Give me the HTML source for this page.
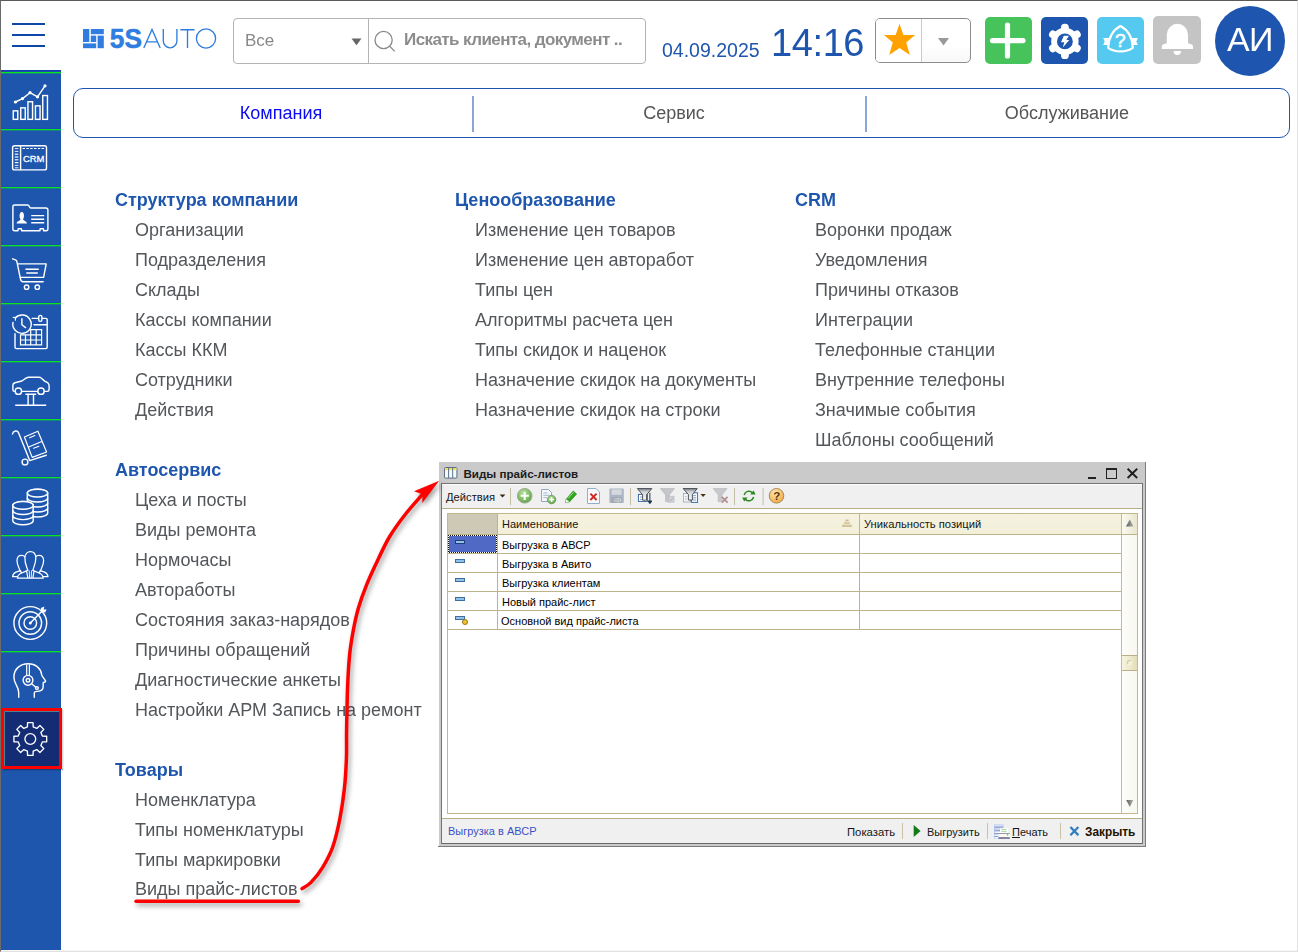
<!DOCTYPE html>
<html lang="ru">
<head>
<meta charset="utf-8">
<title>5S AUTO</title>
<style>
*{box-sizing:border-box;margin:0;padding:0}
html,body{width:1298px;height:952px;overflow:hidden;background:#fff}
body{font-family:"Liberation Sans",sans-serif;position:relative;color:#555}
.abs{position:absolute}
#frame{position:absolute;left:0;top:0;width:1298px;height:952px;border-top:1px solid #5a5a5a;border-left:1px solid #6a6a6a;border-right:1px solid #e2e2e2;border-bottom:1px solid #e1e1e1;box-shadow:inset 0 -1px 0 #f7f7f7;pointer-events:none;z-index:50}
/* sidebar */
#side{position:absolute;left:1px;top:70px;width:60px;height:880px;background:#1e56ae}
.sep{position:absolute;left:1px;width:60px;height:2px;background:#0fd12e}
.ico{position:absolute;left:2px;width:59px;height:56px}
/* header */
#ham div{position:absolute;left:12px;width:33px;height:2px;background:#0d47a8}
#search{position:absolute;left:233px;top:18px;width:413px;height:46px;border:1px solid #b4b4b4;border-radius:4px;background:#fff}
#search .div{position:absolute;left:134px;top:0;width:1px;height:44px;background:#b4b4b4}
#search .all{position:absolute;left:11px;top:12px;font-size:17px;color:#888}
#search .ph{position:absolute;left:170px;top:11px;font-size:17px;font-weight:bold;color:#8c8c8c;letter-spacing:-0.58px}
#date{position:absolute;left:662px;top:38.5px;font-size:19.5px;color:#1e56ae}
#time{position:absolute;left:770.5px;top:22px;font-size:38px;color:#1e56ae;letter-spacing:-0.4px}
/* tabs */
#tabs{position:absolute;left:73px;top:88px;width:1217px;height:50px;border:1px solid #1e56ae;border-radius:10px;background:#fff}
#tabs .t{position:absolute;top:14px;font-size:18px;color:#555;text-align:center;width:300px}
#tabs .d{position:absolute;top:7px;width:2px;height:36px;background:#8aa5d6}
/* menu */
.h{position:absolute;font-size:18px;font-weight:bold;color:#1e56ae;white-space:nowrap}
.i{position:absolute;font-size:18px;color:#53575b;white-space:nowrap}

/* window */
#win{position:absolute;left:439px;top:462px;width:707px;height:385px;background:#cacaca;font-size:11px;color:#1a1a1a}
#win .abs{position:absolute}
#win .t{position:absolute;white-space:nowrap;font-size:11px;line-height:13px;color:#161616}
.tan{position:absolute;background:#bdb38c}
.rowic{position:absolute;width:10px;height:4px;background:#93c2e8;border:1px solid #3f6d9c;box-sizing:border-box}
#menu,#tabs,#search,#date,#time,.gs{will-change:transform}
</style>
</head>
<body>
<div id="side"></div>
<!--SIDEBAR-->
<svg class="abs" style="left:0;top:0" width="70" height="952" viewBox="0 0 70 952">
<rect x="1" y="70" width="60" height="2" fill="#0e42aa"/>
<rect x="1" y="71" width="60" height="1" fill="#1b4db2"/><rect x="1" y="72" width="60" height="1" fill="#08e620"/><rect x="1" y="73" width="60" height="1" fill="#1a8f74" opacity="0.75"/>
<rect x="1" y="128" width="60" height="1" fill="#1b4db2"/><rect x="1" y="129" width="60" height="1" fill="#08e620"/><rect x="1" y="130" width="60" height="1" fill="#1a8f74" opacity="0.75"/>
<rect x="1" y="186" width="60" height="1" fill="#1b4db2"/><rect x="1" y="187" width="60" height="1" fill="#08e620"/><rect x="1" y="188" width="60" height="1" fill="#1a8f74" opacity="0.75"/>
<rect x="1" y="244" width="60" height="1" fill="#1b4db2"/><rect x="1" y="245" width="60" height="1" fill="#08e620"/><rect x="1" y="246" width="60" height="1" fill="#1a8f74" opacity="0.75"/>
<rect x="1" y="302" width="60" height="1" fill="#1b4db2"/><rect x="1" y="303" width="60" height="1" fill="#08e620"/><rect x="1" y="304" width="60" height="1" fill="#1a8f74" opacity="0.75"/>
<rect x="1" y="360" width="60" height="1" fill="#1b4db2"/><rect x="1" y="361" width="60" height="1" fill="#08e620"/><rect x="1" y="362" width="60" height="1" fill="#1a8f74" opacity="0.75"/>
<rect x="1" y="418" width="60" height="1" fill="#1b4db2"/><rect x="1" y="419" width="60" height="1" fill="#08e620"/><rect x="1" y="420" width="60" height="1" fill="#1a8f74" opacity="0.75"/>
<rect x="1" y="476" width="60" height="1" fill="#1b4db2"/><rect x="1" y="477" width="60" height="1" fill="#08e620"/><rect x="1" y="478" width="60" height="1" fill="#1a8f74" opacity="0.75"/>
<rect x="1" y="534" width="60" height="1" fill="#1b4db2"/><rect x="1" y="535" width="60" height="1" fill="#08e620"/><rect x="1" y="536" width="60" height="1" fill="#1a8f74" opacity="0.75"/>
<rect x="1" y="592" width="60" height="1" fill="#1b4db2"/><rect x="1" y="593" width="60" height="1" fill="#08e620"/><rect x="1" y="594" width="60" height="1" fill="#1a8f74" opacity="0.75"/>
<rect x="1" y="650" width="60" height="1" fill="#1b4db2"/><rect x="1" y="651" width="60" height="1" fill="#08e620"/><rect x="1" y="652" width="60" height="1" fill="#1a8f74" opacity="0.75"/>
<g fill="none" stroke="#fff" stroke-width="1.42" stroke-linecap="round" stroke-linejoin="round">
<rect x="13.25" y="110.85" width="4.50" height="8.50" stroke-linejoin="miter"/>
<rect x="20.75" y="107.85" width="4.50" height="11.50" stroke-linejoin="miter"/>
<rect x="27.95" y="101.75" width="4.60" height="17.60" stroke-linejoin="miter"/>
<rect x="35.45" y="105.85" width="4.60" height="13.50" stroke-linejoin="miter"/>
<rect x="42.75" y="95.55" width="4.70" height="23.80" stroke-linejoin="miter"/>
<path d="M15.4 102 L22.5 98.6 L30 92.7 L37.5 96.8 L45 85.8"/>
<circle cx="15.4" cy="102" r="0.9" fill="#fff"/>
<circle cx="22.5" cy="98.6" r="0.9" fill="#fff"/>
<circle cx="30" cy="92.7" r="0.9" fill="#fff"/>
<circle cx="37.5" cy="96.8" r="0.9" fill="#fff"/>
<circle cx="45" cy="85.8" r="0.9" fill="#fff"/>
<rect x="12.6" y="145.8" width="33.9" height="24.1" rx="2"/>
<path d="M20.6 146 V169.8"/>
<path d="M22.6 148.5 H45" stroke-dasharray="2.4 1.4" stroke-linecap="butt" stroke-width="1"/>
<path d="M14.8 148.6 H18.4" stroke-width="0.9" stroke-linecap="butt"/>
<path d="M14.8 151.4 H18.4" stroke-width="0.9" stroke-linecap="butt"/>
<path d="M14.8 154.2 H18.4" stroke-width="1.2" stroke-linecap="butt"/>
<path d="M14.8 157 H18.4" stroke-width="1.2" stroke-linecap="butt"/>
<path d="M14.8 159.8 H18.4" stroke-width="1.2" stroke-linecap="butt"/>
<path d="M14.8 162.6 H18.4" stroke-width="1.2" stroke-linecap="butt"/>
<path d="M14.8 165.4 H18.4" stroke-width="0.9" stroke-linecap="butt"/>
<path d="M14.8 167.8 H18.4" stroke-width="0.9" stroke-linecap="butt"/>
<text x="33.6" y="162" text-anchor="middle" font-family="Liberation Sans, sans-serif" font-size="9.4" fill="#fff" stroke="#fff" stroke-width="0.3" textLength="21.4" lengthAdjust="spacingAndGlyphs">CRM</text>
<path d="M14.4 205 H27.6 Q28.6 205 29.2 206.2 L29.8 207.4 Q30.2 208 31.2 208 H45.8 Q47.9 208 47.9 210 V229 Q47.9 230.8 46 230.8 H43.6 V229.4 Q43.6 228.8 43 228.8 H40.6 Q40 228.8 40 229.4 V230.8 H21.6 V229.4 Q21.6 228.8 21 228.8 H18.6 Q18 228.8 18 229.4 V230.8 H14.8 Q12.9 230.8 12.9 229 V206.6 Q12.9 205 14.4 205 Z"/>
<path d="M31.2 215.6 H44.2 M31.2 219.2 H44.2 M31.2 222.8 H44.2" stroke-linecap="butt"/>
<path d="M16.6 223.6 C17 220.8 19.6 221 20.6 219.4 C19.2 217.8 19 212 21.8 212 C24.6 212 24.4 217.8 23 219.4 C24 221 26.6 220.8 27 223.6 Z" fill="#fff" stroke="none"/>
<path d="M12.6 258.8 L15.4 259.8 Q16.6 260.2 16.9 261.6 L20.4 278.6 Q21 281.8 23 281.8 H43.2"/>
<path d="M17.6 263.9 H46.2 L43.6 277.4 H20.3"/>
<path d="M25.4 269.3 H38.8 M26.3 273 H37.8" stroke-linecap="butt"/>
<circle cx="26.6" cy="287.2" r="2.2"/><circle cx="37.3" cy="287.2" r="2.2"/>
<path d="M15 333.6 V347.2 Q15 348.6 16.4 348.6 H45.8 Q47.2 348.6 47.2 347.2 V319.8 Q47.2 318.4 45.8 318.4 H42.4 M38.2 318.4 H32.2 M34 324.8 H47.2"/>
<rect x="38.7" y="315.4" width="3.2" height="6" rx="1.6"/>
<path d="M15.2 318 A9.2 9.2 0 1 1 13 322.4" /><path d="M13.2 317.4 L15.6 317.6 L15.4 320.2" stroke-width="1.1"/>
<path d="M21.9 318.8 V324.8 L25.6 327.6"/>
<path d="M30.7 329.6 H41.6 V344.8 H20.5 V334.8 H30.7 Z M30.7 334.8 H41.6 M20.5 340 H41.6 M25.5 334.8 V344.8 M30.7 334.8 V344.8 M36.2 329.6 V344.8" stroke-width="1.2" stroke-linejoin="miter"/>
<path d="M15 391.4 H14.4 Q12.9 391.4 12.9 389.8 V385.2 Q12.9 383.2 15 382.7 L21.8 381 L26.4 377.9 Q27.4 377.3 28.6 377.3 H39 Q40.4 377.3 41.4 378.2 L45 381.4 Q49.1 382.6 49.1 386 V389.6 Q49.1 391.4 47.4 391.4 H44.4 M21.8 391.4 H37.6"/>
<circle cx="18.4" cy="391.2" r="3.2"/><circle cx="41" cy="391.2" r="3.2"/>
<path d="M25.4 394.3 H36.2 M28.1 394.3 V405.2 M33.5 394.3 V405.2 M15.2 405.3 H46.2" stroke-linecap="butt"/>
<path d="M12.5 434 Q12.9 431.6 15.4 431 Q17.6 430.6 18.4 432.6 L29.7 460.6 L46.3 455.2"/>
<circle cx="25" cy="462" r="2.9"/>
<path d="M24.4 437 L37.9 431.2 L46.6 452 L32.2 457.4 Z M28.7 447 L42.3 441.3" stroke-width="1.2"/>
<path d="M29.6 437.7 L34.8 435.5 M33.6 448.3 L38.9 446.2" stroke-width="1.1"/>
<path d="M27.3 493.1 V513.1 A10.2 3.9 0 0 0 47.7 513.1 V493.1 A10.2 3.9 0 0 0 27.3 493.1 Z" fill="#1e56ae"/>
<ellipse cx="37.5" cy="493.1" rx="10.2" ry="3.9" fill="#1e56ae"/>
<path d="M27.3 498.1 A10.2 3.9 0 0 0 47.7 498.1"/>
<path d="M27.3 503.1 A10.2 3.9 0 0 0 47.7 503.1"/>
<path d="M27.3 508.1 A10.2 3.9 0 0 0 47.7 508.1"/>
<path d="M12.8 505.4 V520.85 A10.2 3.9 0 0 0 33.2 520.85 V505.4 A10.2 3.9 0 0 0 12.8 505.4 Z" fill="#1e56ae"/>
<ellipse cx="23" cy="505.4" rx="10.2" ry="3.9" fill="#1e56ae"/>
<path d="M12.8 510.54999999999995 A10.2 3.9 0 0 0 33.2 510.54999999999995"/>
<path d="M12.8 515.6999999999999 A10.2 3.9 0 0 0 33.2 515.6999999999999"/>
<path d="M20.4 571.6 C19.4 568.4 16.9 565.4 17 560.4 C17.1 556.8 19.4 555.3 21.6 555.3 C23.2 555.3 24.4 556 25 557 M40.2 571.6 C41.2 568.4 43.7 565.4 43.6 560.4 C43.5 556.8 41.2 555.3 39 555.3 C37.4 555.3 36.2 556 35.6 557" stroke-width="1.25"/>
<path d="M12.6 576.6 Q13 573.4 16 572.2 L20.2 570.6 L21.8 572.8 M12.6 576.6 H17.6 M48 576.6 Q47.6 573.4 44.6 572.2 L40.4 570.6 L38.8 572.8 M48 576.6 H43" stroke-width="1.25"/>
<path d="M17.4 578.2 Q17.6 575 20 573.8 L27 570.6 L33.6 570.6 L40.6 573.8 Q43 575 43.2 578.2 Z" fill="#1e56ae" stroke="none"/>
<path d="M27.8 570.2 C26.6 566.4 24.7 563.4 24.9 558 C25.1 553.6 27.8 551.5 30.4 551.5 C33.2 551.5 35.7 553.6 35.8 558 C35.9 563.4 34 566.4 32.8 570.2" fill="#1e56ae" stroke-width="1.25"/>
<path d="M17.4 578.2 Q17.6 575 20 573.8 L27.6 570.4 M33 570.4 L40.6 573.8 Q43 575 43.2 578.2 M17.4 578.2 H43.2 M26.6 571.2 L27.9 577.8 M34 571.2 L32.9 577.8" stroke-width="1.2"/><path d="M29.2 570.8 L29.6 577.8 M31.6 570.8 L31.2 577.8" stroke-width="0.9"/>
<circle cx="30.3" cy="623" r="16.4"/><circle cx="30.3" cy="623" r="11.3"/><circle cx="30.3" cy="623" r="6.3"/>
<circle cx="30.3" cy="623" r="1.5" fill="#fff" stroke="none"/>
<path d="M30.3 623 L42.4 610.8" stroke-width="1.4"/>
<path d="M40.8 608 L44.4 606.6 L43.6 609.6 L46.6 609.6 L45.2 612.6 L41.4 612.2 Z" fill="#fff" stroke="none"/>
<path d="M18.7 697.2 V692.4 C18.7 686.4 13.9 684.2 13.9 677 C13.9 669 20.2 663.8 28 663.8 C35.8 663.8 40.8 668.4 41.6 674.4 Q41.8 675.4 42.4 676.4 L45.4 680.6 Q45.9 681.6 44.8 682 L43.2 682.6 V686.6 C43.2 690 41 691.2 37.6 691.4 L35.4 691.6 Q34.3 691.8 34.3 693 V697.2"/>
<path d="M26.7 664.4 V675.4 M29.4 664.4 V675.4" stroke-linecap="butt" stroke-width="1.2"/>
<circle cx="28" cy="680.3" r="4.9" fill="#1e56ae"/><circle cx="28" cy="680.3" r="1.8"/>
<path d="M31.6 683.8 L35.8 687.2"/><circle cx="36.9" cy="688.1" r="1.4" fill="#1e56ae"/>
</g>
<rect x="63" y="710" width="1" height="60" fill="#000" opacity="0.07"/><rect x="3" y="769" width="60" height="1" fill="#000" opacity="0.28"/><rect x="3" y="770" width="60" height="1" fill="#000" opacity="0.10"/>
<rect x="62" y="709" width="1" height="61" fill="#000" opacity="0.18"/>
<rect x="1" y="708" width="61" height="61" fill="#ff0000"/>
<rect x="4" y="711" width="55" height="55" fill="#132c74"/>
<path d="M4.5 766 V711.5 H59" fill="none" stroke="#5f8a96" stroke-width="1" opacity="0.9"/>
<path d="M27.41 726.94 L27.56 722.63 L33.04 722.63 L33.19 726.94 L36.78 728.43 L39.94 725.49 L43.81 729.36 L40.87 732.52 L42.36 736.11 L46.67 736.26 L46.67 741.74 L42.36 741.89 L40.87 745.48 L43.81 748.64 L39.94 752.51 L36.78 749.57 L33.19 751.06 L33.04 755.37 L27.56 755.37 L27.41 751.06 L23.82 749.57 L20.66 752.51 L16.79 748.64 L19.73 745.48 L18.24 741.89 L13.93 741.74 L13.93 736.26 L18.24 736.11 L19.73 732.52 L16.79 729.36 L20.66 725.49 L23.82 728.43 Z" fill="none" stroke="#fff" stroke-width="1.35" stroke-linejoin="round"/>
<circle cx="30.3" cy="739" r="5.4" fill="none" stroke="#fff" stroke-width="1.35"/>
</svg>
<!--/SIDEBAR-->
<div id="ham"><div style="top:23px"></div><div style="top:34px"></div><div style="top:45px"></div></div>


<!-- logo -->
<svg class="abs" style="left:80px;top:24px" width="142" height="30" viewBox="80 24 142 30">
  <g fill="#2f7de0">
    <rect x="83" y="29" width="6.3" height="13"/>
    <rect x="90.8" y="29" width="13" height="5.2"/>
    <rect x="97.6" y="35.6" width="6.2" height="12.6"/>
    <rect x="83" y="43.4" width="13.2" height="4.8"/>
    <rect x="90.8" y="35.6" width="5.4" height="6.4"/>
  </g>
  <text x="109.8" y="48" font-family="Liberation Sans, sans-serif" font-weight="bold" font-size="27.4" fill="#2f7de0" stroke="#2f7de0" stroke-width="0.5" textLength="32.2" lengthAdjust="spacingAndGlyphs">5S</text>
  <g fill="none" stroke="#2f7de0" stroke-width="1.35">
    <path d="M143.8 48 L152 29.4 L160.2 48 M146.6 41.8 H157.4"/>
    <path d="M163.3 29 V41 a6.8 6.8 0 0 0 13.6 0 V29"/>
    <path d="M180.4 29.7 H194.6 M187.5 29.7 V48"/>
    <circle cx="206" cy="38.5" r="9.6"/>
  </g>
</svg>
<div id="search"><div class="div"></div><svg class="abs" style="left:116px;top:18px" width="14" height="10" viewBox="0 0 14 10"><path d="M1.5 1.5 H11.5 L6.5 8.2 Z" fill="#666"/></svg>
<svg class="abs" style="left:138px;top:10px" width="26" height="26" viewBox="0 0 26 26"><circle cx="11.6" cy="11" r="8.6" fill="none" stroke="#8a8a8a" stroke-width="1.3"/><path d="M17.6 17.2 L22.8 22.4" stroke="#8a8a8a" stroke-width="1.3"/></svg>
<div class="all">Все</div><div class="ph">Искать клиента, документ ..</div></div>
<div id="date">04.09.2025</div>
<div id="time">14:16</div>


<!-- star box -->
<div class="abs" style="left:875px;top:18px;width:96px;height:45px;border:1px solid #8c8c8c;border-radius:5px;background:linear-gradient(180deg,#fff 0%,#fff 60%,#f8f8f8 100%)"></div>
<div class="abs" style="left:876px;top:19px;width:45px;height:43px;background:#fff;border-radius:4px 0 0 4px"></div>
<div class="abs" style="left:921px;top:19px;width:1px;height:43px;background:#c9c9c9"></div>
<svg class="abs" style="left:882px;top:22px" width="36" height="36" viewBox="0 0 36 36"><path d="M17.5 1.7 L21.4 13 L33.1 13.1 L24.2 20.5 L27.9 33.1 L17.5 26.1 L7.1 33.1 L10.8 20.5 L1.9 13.1 L13.6 13 Z" fill="#ffa200"/></svg>
<svg class="abs" style="left:936px;top:36px" width="16" height="12" viewBox="0 0 16 12"><path d="M2 2 H13 L7.5 9.4 Z" fill="#9a9a9a"/></svg>
<!-- buttons -->
<div class="abs" style="left:985px;top:17px;width:47px;height:47px;border-radius:5px;background:#46c35a"></div>
<div class="abs" style="left:1041px;top:17px;width:47px;height:47px;border-radius:5px;background:#1e55ae"></div>
<div class="abs" style="left:1097px;top:17px;width:47px;height:47px;border-radius:5px;background:#56c9f1"></div>
<div class="abs" style="left:1153px;top:16px;width:48px;height:48px;border-radius:5px;background:#c4c4c4"></div>
<svg class="abs" style="left:985px;top:17px" width="47" height="47" viewBox="985 17 47 47"><path d="M992.5 40.6 H1023 M1007.5 25.2 V56" stroke="#fff" stroke-width="5.2" stroke-linecap="round" fill="none"/></svg>
<svg class="abs" style="left:1041px;top:17px" width="47" height="47" viewBox="1041 17 47 47">
  <g fill="#fff"><circle cx="1064.9" cy="41.4" r="13.7"/>
  <rect x="1061" y="23.8" width="7.8" height="35.2" rx="3.6"/>
  <rect x="1061" y="23.8" width="7.8" height="35.2" rx="3.6" transform="rotate(60 1064.9 41.4)"/>
  <rect x="1061" y="23.8" width="7.8" height="35.2" rx="3.6" transform="rotate(120 1064.9 41.4)"/></g>
  <circle cx="1064.9" cy="41.4" r="7.9" fill="#1e55ae"/>
  <path d="M1063.8 35.7 H1068.9 L1066.4 40 H1069.3 L1062.8 47.6 L1064.3 42.3 H1061 Z" fill="#fff"/>
</svg>
<svg class="abs" style="left:1097px;top:17px" width="47" height="47" viewBox="1097 17 47 47">
  <path d="M1120.4 26 C1113 30 1108.6 38 1108.2 47.8 C1115 52.6 1126 52.6 1132.8 47.8 C1132.4 38 1128 30 1120.4 26 Z" fill="none" stroke="#fff" stroke-width="2.1" stroke-linejoin="round"/>
  <path d="M1109.4 37.9 H1103.2 L1104.7 41.4 L1103.2 44.9 H1107.8 Z M1131.6 37.9 H1137.9 L1136.3 41.4 L1137.9 44.9 H1133.2 Z" fill="#fff"/>
  <text x="1120.4" y="47.4" text-anchor="middle" font-family="Liberation Sans, sans-serif" font-size="19" fill="#fff" stroke="#fff" stroke-width="0.6">?</text>
</svg>
<svg class="abs" style="left:1153px;top:16px" width="48" height="48" viewBox="1153 16 48 48">
  <path d="M1166.8 34.4 A10.6 10.6 0 0 1 1188 34.4 V42 Q1188 44 1190.5 44 A2.6 2.6 0 0 1 1193 46.6 V49 H1161.8 V46.6 A2.6 2.6 0 0 1 1164.3 44 Q1166.8 44 1166.8 42 Z" fill="#fff"/>
  <path d="M1173.6 51 H1181 A3.7 3.9 0 0 1 1173.6 51 Z" fill="#fff"/>
</svg>
<!-- avatar -->
<div class="abs" style="left:1215px;top:6px;width:70px;height:70px;border-radius:50%;background:#1e55ae"></div>
<div class="abs gs" style="left:1213.6px;top:19.5px;width:72px;text-align:center;font-size:34px;line-height:38px;color:#fff;letter-spacing:-0.6px">АИ</div>

<div id="tabs">
  <div class="t" style="left:57px;color:#0b0bf2">Компания</div>
  <div class="d" style="left:398px"></div>
  <div class="t" style="left:450px">Сервис</div>
  <div class="d" style="left:791px"></div>
  <div class="t" style="left:843px">Обслуживание</div>
</div>

<div id="menu">
<div class="h" style="left:115px;top:190px">Структура компании</div>
<div class="i" style="left:135px;top:220px">Организации</div>
<div class="i" style="left:135px;top:250px">Подразделения</div>
<div class="i" style="left:135px;top:280px">Склады</div>
<div class="i" style="left:135px;top:310px">Кассы компании</div>
<div class="i" style="left:135px;top:340px">Кассы ККМ</div>
<div class="i" style="left:135px;top:370px">Сотрудники</div>
<div class="i" style="left:135px;top:400px">Действия</div>
<div class="h" style="left:115px;top:460px">Автосервис</div>
<div class="i" style="left:135px;top:490px">Цеха и посты</div>
<div class="i" style="left:135px;top:520px">Виды ремонта</div>
<div class="i" style="left:135px;top:550px">Нормочасы</div>
<div class="i" style="left:135px;top:580px">Автоработы</div>
<div class="i" style="left:135px;top:610px">Состояния заказ-нарядов</div>
<div class="i" style="left:135px;top:640px">Причины обращений</div>
<div class="i" style="left:135px;top:670px">Диагностические анкеты</div>
<div class="i" style="left:135px;top:700px">Настройки АРМ Запись на ремонт</div>
<div class="h" style="left:115px;top:760px">Товары</div>
<div class="i" style="left:135px;top:790px">Номенклатура</div>
<div class="i" style="left:135px;top:820px">Типы номенклатуры</div>
<div class="i" style="left:135px;top:850px">Типы маркировки</div>
<div class="i" style="left:135px;top:879px">Виды прайс-листов</div>
<div class="h" style="left:455px;top:190px">Ценообразование</div>
<div class="i" style="left:475px;top:220px">Изменение цен товаров</div>
<div class="i" style="left:475px;top:250px">Изменение цен авторабот</div>
<div class="i" style="left:475px;top:280px">Типы цен</div>
<div class="i" style="left:475px;top:310px">Алгоритмы расчета цен</div>
<div class="i" style="left:475px;top:340px">Типы скидок и наценок</div>
<div class="i" style="left:475px;top:370px">Назначение скидок на документы</div>
<div class="i" style="left:475px;top:400px">Назначение скидок на строки</div>
<div class="h" style="left:795px;top:190px">CRM</div>
<div class="i" style="left:815px;top:220px">Воронки продаж</div>
<div class="i" style="left:815px;top:250px">Уведомления</div>
<div class="i" style="left:815px;top:280px">Причины отказов</div>
<div class="i" style="left:815px;top:310px">Интеграции</div>
<div class="i" style="left:815px;top:340px">Телефонные станции</div>
<div class="i" style="left:815px;top:370px">Внутренние телефоны</div>
<div class="i" style="left:815px;top:400px">Значимые события</div>
<div class="i" style="left:815px;top:430px">Шаблоны сообщений</div>
</div>

<div id="win">
  <!-- borders -->
  <div class="abs" style="left:706px;top:0;width:1px;height:385px;background:#7c7c7c"></div>
  <div class="abs" style="left:-1px;top:384px;width:708px;height:1px;background:#7c7c7c"></div>
  <div class="abs" style="left:2px;top:21px;width:702px;height:361px;background:#f0f0f0;border:1px solid #747474;border-bottom-color:#6a6a6a"></div>
  <!-- title -->
  <svg class="abs" style="left:5px;top:5px" width="14" height="12" viewBox="0 0 14 12"><rect x="0.5" y="0.5" width="12.4" height="10.6" rx="1" fill="#f3fbff" stroke="#5b7088"/><rect x="1" y="1" width="11.4" height="2.2" fill="#f3df63"/><path d="M4.6 1 V11 M8.7 1 V11" stroke="#5b7088"/></svg>
  <div class="t" id="wtitle" style="left:24.5px;top:5px;font-weight:bold;font-size:11.6px;color:#1c1c1c">Виды прайс-листов</div>
  <div class="abs" style="left:649px;top:15px;width:8px;height:2px;background:#222"></div>
  <div class="abs" style="left:667px;top:6px;width:11px;height:11px;border:1px solid #222;border-top-width:2px"></div>
  <svg class="abs" style="left:687px;top:5px" width="13" height="13" viewBox="0 0 13 13"><path d="M1.6 1.8 L11.2 11 M11.2 1.8 L1.6 11" stroke="#1e1e1e" stroke-width="1.9" fill="none"/></svg>
  <!-- toolbar -->
  <div class="abs" style="left:3px;top:22px;width:700px;height:1px;background:#fbfbfb"></div>
  <div class="tan" style="left:3px;top:46px;width:700px;height:1px;background:#b9ae86"></div>
  <div class="abs" style="left:3px;top:47px;width:700px;height:309px;background:#fff"></div>
  <div class="t" id="wact" style="left:7px;top:29px;font-size:11.2px">Действия</div>
  <svg class="abs" style="left:60px;top:31.5px" width="8" height="5" viewBox="0 0 8 5"><path d="M0.6 0.4 H6.4 L3.5 3.6 Z" fill="#3a2a10"/></svg>
  <div class="abs" style="left:71px;top:26px;width:1px;height:17px;background:#c4bea2"></div>
<svg class="abs" style="left:75px;top:24px" width="290" height="22" viewBox="514 486 290 22">
<defs>
<radialGradient id="gg" cx="0.4" cy="0.3" r="0.8"><stop offset="0" stop-color="#b4e09c"/><stop offset="1" stop-color="#58a03e"/></radialGradient>
<linearGradient id="fg" x1="0" y1="0" x2="0" y2="1"><stop offset="0" stop-color="#7c8188"/><stop offset="0.3" stop-color="#d4d7da"/><stop offset="1" stop-color="#f6f7f8"/></linearGradient>
<radialGradient id="go" cx="0.4" cy="0.3" r="0.8"><stop offset="0" stop-color="#ffe9b8"/><stop offset="1" stop-color="#eea234"/></radialGradient>
</defs>
<!-- add -->
<circle cx="524.7" cy="495.8" r="7.3" fill="url(#gg)" stroke="#9aa892" stroke-width="1"/>
<path d="M520.6 495.8 H528.8 M524.7 491.7 V499.9" stroke="#fff" stroke-width="2.1"/>
<!-- copy doc -->
<path d="M541.5 489.5 H548.5 L551.5 492.5 V501.5 H541.5 Z" fill="#f4f8fc" stroke="#8aa0b8" stroke-width="0.9"/>
<path d="M543.3 493 H547.5 M543.3 495.3 H549.6 M543.3 497.6 H547" stroke="#9fb2c6" stroke-width="0.9"/>
<circle cx="551.6" cy="499.6" r="4.2" fill="url(#gg)" stroke="#5c8a4c" stroke-width="0.7"/>
<path d="M549.2 499.6 H554 M551.6 497.2 V502" stroke="#fff" stroke-width="1.5"/>
<!-- pencil -->
<path d="M566.2 499.2 L573.2 491 L576.6 494 L569.4 502 L565.4 502.8 Z" fill="#2fa81e" stroke="#237a18" stroke-width="0.6"/>
<path d="M565.4 502.8 L566.2 499.2 L569.4 502 Z" fill="#fafaf2"/>
<path d="M568 498.4 L573.6 492.2" stroke="#9fe08f" stroke-width="1"/>
<!-- delete doc -->
<path d="M587.5 488.5 H596 L599.5 492 V503.5 H587.5 Z" fill="#f6f9fd" stroke="#8aa4c4" stroke-width="0.9"/>
<path d="M590.4 493.6 L596.6 500 M596.6 493.6 L590.4 500" stroke="#d22a1e" stroke-width="1.9"/>
<!-- save disabled -->
<rect x="609.4" y="488.6" width="14.4" height="14.4" rx="1" fill="#aab6c6"/>
<rect x="611.6" y="489.4" width="10" height="5.4" fill="#d5d9df"/>
<rect x="611.2" y="497" width="10.8" height="6" fill="#a6acb6"/>
<path d="M615 498.5 V501.8 M617 498.5 H619 V501.8 H617 Z M620.6 498.5 V501.8" stroke="#d8dce2" stroke-width="0.8" fill="none"/>
<rect x="630" y="488" width="1" height="17" fill="#c4bea2"/>
<!-- filter1 -->
<rect x="638.4" y="494.4" width="9" height="7" fill="#fff" stroke="#2f5f9c" stroke-width="0.9"/>
<path d="M640 497 H642 M640 499.4 H642 M645 497 H646.4 M645 499.4 H646.4" stroke="#6f8fb8" stroke-width="0.8"/>
<path d="M637.4 488.6 H651.8 L646.6 494.8 V500.2 H642.6 V494.8 Z" fill="url(#fg)" stroke="#3c4248" stroke-width="0.9"/>
<path d="M649.9 492.8 V503.4 M647.9 501 L649.9 503.6 L651.9 501 Z" stroke="#1f3550" stroke-width="1" fill="#1f3550"/>
<!-- filter2 disabled -->
<path d="M660.4 488.6 H674.4 L669.4 494.8 V501.6 H665.6 V494.8 Z" fill="#c4c6c9" stroke="#b4b6ba" stroke-width="0.7"/>
<rect x="668.4" y="496.2" width="5.6" height="6" fill="#cfd1d5" stroke="#bcbec2" stroke-width="0.7"/>
<path d="M669.6 499.4 L671 500.8 L673 497.6" stroke="#b0b3b8" stroke-width="0.9" fill="none"/>
<!-- filter3 -->
<rect x="683.6" y="493.4" width="7" height="8.6" fill="#f4f6f9" stroke="#9aa4b0" stroke-width="0.8"/>
<path d="M685 496.6 H686.6 M685 499 H686.6" stroke="#9aa4b0" stroke-width="0.8"/>
<rect x="691.4" y="492.8" width="6.2" height="9.6" fill="#f2f7fd" stroke="#2f66a8" stroke-width="0.9"/>
<path d="M693 495.6 H696 M693 497.8 H696 M693 500 H696" stroke="#6f95c8" stroke-width="0.8"/>
<path d="M683.2 488.6 H697.2 L692.4 494.6 V500 H688.4 V494.6 Z" fill="url(#fg)" stroke="#3c4248" stroke-width="0.9"/>
<path d="M700.4 494 H705.8 L703.1 497 Z" fill="#4a3510"/>
<!-- filter4 disabled -->
<path d="M713.2 488.6 H727 L722 494.8 V501.6 H718.2 V494.8 Z" fill="#c6c8cb" stroke="#b6b8bc" stroke-width="0.7"/>
<path d="M721.8 496.8 L727.6 502.6 M727.6 496.8 L721.8 502.6" stroke="#b38c8c" stroke-width="1.7"/>
<rect x="734" y="488" width="1" height="17" fill="#c4bea2"/>
<!-- refresh -->
<path d="M744.2 495 A4.9 4.9 0 0 1 752.4 492.6" fill="none" stroke="#2a8a1c" stroke-width="1.5"/>
<path d="M753.6 497 A4.9 4.9 0 0 1 745.4 499.4" fill="none" stroke="#2a8a1c" stroke-width="1.5"/>
<path d="M750.2 494.6 L755.6 494.6 L753.6 490.4 Z M747.6 497.4 L742.2 497.4 L744.2 501.6 Z" fill="#2a8a1c"/>
<rect x="762.6" y="488" width="1" height="17" fill="#c4bea2"/>
<!-- help -->
<circle cx="776.5" cy="495.8" r="7.3" fill="url(#go)" stroke="#a08050" stroke-width="0.9"/>
<text x="776.7" y="500" text-anchor="middle" font-family="Liberation Sans, sans-serif" font-size="11.5" font-weight="bold" fill="#5e3404">?</text>
</svg>

  <!-- table -->
  <div class="abs" style="left:8px;top:51px;width:691px;height:301px;border:1px solid #c1b790;background:#fff"></div>
  <div class="abs" style="left:9px;top:52px;width:673px;height:20px;background:linear-gradient(180deg,#f5f3e0 0%,#f2efd9 100%)"></div>
  <div class="abs" style="left:9px;top:52px;width:49px;height:20px;background:#cec9b4"></div>
  <div class="abs" style="left:683px;top:52px;width:15px;height:299px;background:linear-gradient(90deg,#fdfdfa 0%,#f8f7f0 100%)"></div>
  <div class="abs" style="left:683px;top:52px;width:15px;height:20px;background:linear-gradient(90deg,#fbfaf0 0%,#eae6cc 100%)"></div>
  <div class="tan" style="left:682px;top:52px;width:1px;height:299px;background:#c5bb96"></div>
  <div class="tan" style="left:9px;top:72px;width:689px;height:1px"></div>
  <div class="tan" style="left:9px;top:91px;width:673px;height:1px"></div>
  <div class="tan" style="left:9px;top:110px;width:673px;height:1px"></div>
  <div class="tan" style="left:9px;top:129px;width:673px;height:1px"></div>
  <div class="tan" style="left:9px;top:148px;width:673px;height:1px"></div>
  <div class="tan" style="left:9px;top:167px;width:673px;height:1px"></div>
  <div class="tan" style="left:58px;top:52px;width:1px;height:116px"></div>
  <div class="tan" style="left:420px;top:52px;width:1px;height:116px"></div>
  <!-- selected cell -->
  <div class="abs" style="left:9px;top:73px;width:49px;height:18px;background:#5069c5"></div>
  <div class="abs" style="left:9px;top:73px;width:49px;height:1px;background:repeating-linear-gradient(90deg,#111 0 1px,#fff 1px 2px)"></div>
  <div class="abs" style="left:9px;top:90px;width:49px;height:1px;background:repeating-linear-gradient(90deg,#fff 0 1px,#111 1px 2px)"></div>
  <div class="abs" style="left:9px;top:73px;width:1px;height:18px;background:repeating-linear-gradient(180deg,#111 0 1px,#fff 1px 2px)"></div>
  <div class="abs" style="left:57px;top:73px;width:1px;height:18px;background:repeating-linear-gradient(180deg,#111 0 1px,#fff 1px 2px)"></div>
  <div class="rowic" style="left:16px;top:78px;border-color:#1c3f7a"></div>
  <div class="rowic" style="left:16px;top:97px"></div>
  <div class="rowic" style="left:16px;top:116px"></div>
  <div class="rowic" style="left:16px;top:135px"></div>
  <div class="rowic" style="left:16px;top:154px"></div>
  <div class="abs" style="left:23px;top:157px;width:6px;height:6px;border-radius:50%;background:#f2c230;border:1px solid #9a7410"></div>
  <!-- header texts -->
  <div class="t" id="h1" style="left:63px;top:56px">Наименование</div>
  <div class="t" id="h2" style="left:425px;top:56px;font-size:11.2px">Уникальность позиций</div>
  <svg class="abs" style="left:402px;top:57px" width="12" height="9" viewBox="0 0 12 9"><path d="M4.5 1.5 H7.5 M3 4 H9 M1 6.8 H11" stroke="#c6b886" stroke-width="1.7"/><path d="M4.5 0.8 H7.5 M3 3.3 H9 M1 6 H11" stroke="#e2d6a8" stroke-width="0.8"/></svg>
  <div class="t" id="r1" style="left:63px;top:77px;color:#000">Выгрузка в АВСР</div>
  <div class="t" id="r2" style="left:63px;top:96px;color:#000">Выгрузка в Авито</div>
  <div class="t" id="r3" style="left:63px;top:115px;color:#000">Выгрузка клиентам</div>
  <div class="t" id="r4" style="left:63px;top:134px;color:#000">Новый прайс-лист</div>
  <div class="t" id="r5" style="left:62px;top:153px;color:#000">Основной вид прайс-листа</div>
  <!-- scrollbar -->
  <svg class="abs" style="left:686px;top:57px" width="10" height="9" viewBox="0 0 10 9"><defs><linearGradient id="ga" x1="0" y1="0" x2="1" y2="0"><stop offset="0" stop-color="#5c5c5c"/><stop offset="1" stop-color="#b4b4b4"/></linearGradient></defs><path d="M4.8 0.6 L8.6 7.6 H1 Z" fill="url(#ga)"/></svg>
  <svg class="abs" style="left:686px;top:337px" width="10" height="9" viewBox="0 0 10 9"><path d="M4.8 8 L8.4 1 H1.2 Z" fill="url(#ga)"/></svg>
  <div class="abs" style="left:683px;top:193px;width:15px;height:16px;background:linear-gradient(90deg,#f6f3e0,#efeacc 50%,#e3ddb8);border-top:1px solid #b9ae84;border-bottom:1px solid #b9ae84"></div>
  <div class="abs" style="left:688px;top:198px;width:5px;height:5px;border-radius:50%;background:#f4f0da;border:1px solid #cfc8a6;border-right-color:#f6f3e2;border-bottom-color:#f6f3e2"></div>
  <!-- status -->
  <div class="tan" style="left:3px;top:356px;width:700px;height:1px;background:#b9ae86"></div>
  <div class="t" id="st1" style="left:9px;top:363px;color:#3c50c8">Выгрузка в АВСР</div>
  <div class="t" id="st2" style="left:408px;top:363.5px;font-size:11.3px">Показать</div>
  <div class="abs" style="left:463px;top:361px;width:1px;height:16px;background:#c9c3a6"></div>
  <svg class="abs" style="left:474px;top:363px" width="9" height="12" viewBox="0 0 9 12"><path d="M0.7 0 L7.6 6 L0.7 12 Z" fill="#127a18"/></svg>
  <div class="t" id="st3" style="left:488px;top:363.5px">Выгрузить</div>
  <div class="abs" style="left:548px;top:361px;width:1px;height:16px;background:#c9c3a6"></div>
  <svg class="abs" style="left:555px;top:362px" width="17" height="16" viewBox="0 0 17 16">
  <rect x="0" y="0.4" width="9.6" height="14.2" fill="#b2cdf4"/>
  <path d="M0.8 2 H9 M0.8 5.2 H8 M0.8 8.4 H6 M0.8 11.4 H4 M0.8 13.6 H4" stroke="#fff" stroke-width="1.1"/>
  <path d="M0.4 3 H9 M0.4 6.2 H6 M0.4 9.4 H5 M0.4 12.4 H4" stroke="#8c88ba" stroke-width="0.9"/>
  <rect x="6" y="4.2" width="8" height="5.4" fill="#fff"/>
  <path d="M7.2 5.6 H12.6 M7.2 7.6 H12.6" stroke="#9fd29a" stroke-width="0.9"/>
  <rect x="4.4" y="9.6" width="11.4" height="4.4" fill="#fcfaf0"/>
  <path d="M4.4 9.5 H15.8" stroke="#8e8ea6" stroke-width="0.9"/>
  <path d="M4.4 14 H15.8" stroke="#4c4c7a" stroke-width="1.3"/>
  <rect x="13" y="10.2" width="1.2" height="1.2" fill="#12d422"/>
</svg>
  <div class="t" id="st4" style="left:573px;top:363.5px"><span style="text-decoration:underline">П</span>ечать</div>
  <div class="abs" style="left:621px;top:361px;width:1px;height:16px;background:#c9c3a6"></div>
  <svg class="abs" style="left:630px;top:364px" width="11" height="11" viewBox="0 0 11 11"><path d="M2.2 1.8 L8.6 8.4 M8.6 1.8 L2.2 8.4" stroke="#2f7fc0" stroke-width="2.3" stroke-linecap="square" fill="none"/></svg>
  <div class="t" id="st5" style="left:646px;top:363.5px;font-weight:bold;font-size:11.85px;color:#221400">Закрыть</div>
</div>
<!--ARROW-->
<svg class="abs" style="left:0;top:0;z-index:20;filter:drop-shadow(2.5px 3px 2.5px rgba(0,0,0,0.38))" width="1298" height="952" viewBox="0 0 1298 952">
<path d="M302 888.6 C303.5 887.6 307.6 885.9 311 882.4 C314.4 878.9 318.9 873.5 322.5 867.6 C326.1 861.7 329.8 855.3 332.7 847 C335.6 838.7 338.1 827.8 340 818 C341.9 808.2 343.3 798.3 344.4 788.5 C345.5 778.7 346.0 768.8 346.4 759 C346.8 749.2 346.4 742.0 346.6 730 C346.8 718.0 347.1 699.5 347.6 687 C348.1 674.5 348.7 664.2 349.6 655 C350.5 645.8 351.6 639.7 353 632 C354.4 624.3 356.0 616.4 358.2 608.7 C360.4 601.0 363.2 593.3 366.3 585.6 C369.4 577.9 372.9 570.5 376.7 562.4 C380.5 554.3 384.6 545.1 389.4 537 C394.2 528.9 400.2 520.9 405.6 514 C411.0 507.1 418.9 498.5 421.5 495.4" fill="none" stroke="#ff0000" stroke-width="3.5" stroke-linecap="round"/>
<path d="M439.2 480.7 L414 491.3 L420.9 493.8 L422.4 496.6 L422.3 503 Z" fill="#ff0000"/>
<path d="M136 901.3 H298.3" stroke="#ff0000" stroke-width="3.4" stroke-linecap="round" fill="none"/>
</svg>
<!--/ARROW-->
<div id="frame"></div>
</body>
</html>
